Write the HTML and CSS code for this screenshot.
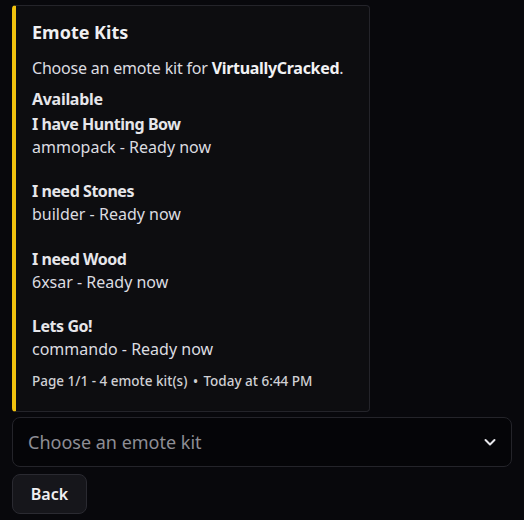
FILE: index.html
```html
<!DOCTYPE html>
<html>
<head>
<meta charset="utf-8">
<link rel="stylesheet" href="styles.css">
</head>
<body>
<div class="msg">
  <div class="embed">
    <div class="embed-body">
      <div class="title">Emote Kits</div>
      <div class="desc">Choose an emote kit for <strong>VirtuallyCracked</strong>.</div>
      <div class="section">Available</div>
      <div class="list">
        <div class="kit"><div class="kit-name">I have Hunting Bow</div><div class="kit-info">ammopack - Ready now</div></div>
        <div class="kit"><div class="kit-name">I need Stones</div><div class="kit-info">builder - Ready now</div></div>
        <div class="kit"><div class="kit-name">I need Wood</div><div class="kit-info">6xsar - Ready now</div></div>
        <div class="kit"><div class="kit-name">Lets Go!</div><div class="kit-info">commando - Ready now</div></div>
      </div>
      <div class="footer">Page 1/1 - 4 emote kit(s) <span class="dot">•</span> Today at 6:44 PM</div>
    </div>
  </div>
  <div class="select">
    <span class="placeholder">Choose an emote kit</span>
    <svg class="chev" width="16" height="16" viewBox="0 0 16 16"><path d="M3.5 6 L8 10.5 L12.5 6" fill="none" stroke="#e6e6ea" stroke-width="2" stroke-linecap="round" stroke-linejoin="round"/></svg>
  </div>
  <div class="actions">
    <button class="btn">Back</button>
  </div>
</div>
</body>
</html>
```
FILE: styles.css
```css
* { box-sizing: border-box; }
html, body { margin: 0; padding: 0; background: #08080c; }
body { font-family: "Noto Sans", "Open Sans", sans-serif; color: #dcdce0; }
.msg { padding: 5px 12px 0 12px; display: flex; flex-direction: column; }
.embed {
  width: 358px;
  height: 407px;
  background: #0d0d10;
  border: 1px solid #24242a;
  border-left: 4px solid #f0c10e;
  border-radius: 4px;
}
.embed-body { padding: 14px 8px 0 16px; display: flex; flex-direction: column; }
.title { font-size: 18px; font-weight: 700; color: #f0f0f2; line-height: 24px; }
.desc { font-size: 16px; line-height: 22px; margin-top: 13px; color: #dcdce0; white-space: nowrap; letter-spacing: -0.2px; }
.desc strong { color: #f2f2f4; font-weight: 700; letter-spacing: -0.3px; }
.section { font-size: 16px; font-weight: 700; line-height: 22px; margin-top: 9px; color: #e6e6ea; letter-spacing: -0.3px; }
.list { display: flex; flex-direction: column; gap: 22px; margin-top: 3px; }
.kit-name { font-size: 16px; font-weight: 700; line-height: 22px; color: #e6e6ea; letter-spacing: -0.45px; }
.kit-info { font-size: 16px; line-height: 23px; color: #dcdce0; padding-top: 1px; margin-bottom: -0.7px; }
.footer { font-size: 13.5px; font-weight: 500; line-height: 18px; margin-top: 12px; color: #d0d0d4; }
.dot { margin: 0 2px; }
.select {
  margin-top: 5px;
  height: 50px;
  width: 500px;
  border: 1px solid #24242a;
  border-radius: 8px;
  background: #050508;
  display: flex;
  align-items: center;
  justify-content: space-between;
  padding: 0 13px 0 15px;
}
.placeholder { font-size: 18px; color: #8e8e95; }
.actions { margin-top: 7px; display: flex; }
.btn {
  font-family: inherit;
  font-size: 16px;
  font-weight: 600;
  color: #f0f0f2;
  background: #16161b;
  border: 1px solid #2a2a31;
  border-radius: 8px;
  height: 40px;
  width: 75px;
  padding: 0;
}
```
